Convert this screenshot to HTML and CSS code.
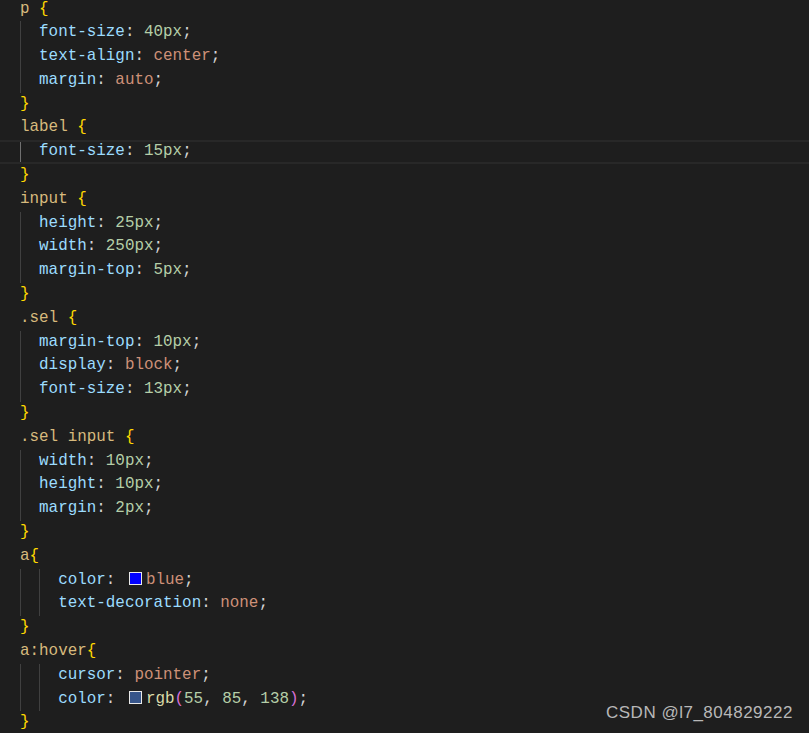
FILE: index.html
```html
<!DOCTYPE html>
<html>
<head>
<meta charset="utf-8">
<link rel="stylesheet" href="styles.css">
</head>
<body>
<div class="editor">
  <div class="ln"><span class="code"><span class="sel">p</span> <span class="b1">{</span></span></div>
  <div class="ln"><span class="g"></span><span class="code"><span class="pr">font-size</span><span class="pn">: </span><span class="nm">40px</span><span class="pn">;</span></span></div>
  <div class="ln"><span class="g"></span><span class="code"><span class="pr">text-align</span><span class="pn">: </span><span class="vl">center</span><span class="pn">;</span></span></div>
  <div class="ln"><span class="g"></span><span class="code"><span class="pr">margin</span><span class="pn">: </span><span class="vl">auto</span><span class="pn">;</span></span></div>
  <div class="ln"><span class="code"><span class="b1">}</span></span></div>
  <div class="ln"><span class="code"><span class="sel">label</span> <span class="b1">{</span></span></div>
  <div class="ln active"><span class="g ga"></span><span class="code"><span class="pr">font-size</span><span class="pn">: </span><span class="nm">15px</span><span class="pn">;</span></span></div>
  <div class="ln"><span class="code"><span class="b1">}</span></span></div>
  <div class="ln"><span class="code"><span class="sel">input</span> <span class="b1">{</span></span></div>
  <div class="ln"><span class="g"></span><span class="code"><span class="pr">height</span><span class="pn">: </span><span class="nm">25px</span><span class="pn">;</span></span></div>
  <div class="ln"><span class="g"></span><span class="code"><span class="pr">width</span><span class="pn">: </span><span class="nm">250px</span><span class="pn">;</span></span></div>
  <div class="ln"><span class="g"></span><span class="code"><span class="pr">margin-top</span><span class="pn">: </span><span class="nm">5px</span><span class="pn">;</span></span></div>
  <div class="ln"><span class="code"><span class="b1">}</span></span></div>
  <div class="ln"><span class="code"><span class="sel">.sel</span> <span class="b1">{</span></span></div>
  <div class="ln"><span class="g"></span><span class="code"><span class="pr">margin-top</span><span class="pn">: </span><span class="nm">10px</span><span class="pn">;</span></span></div>
  <div class="ln"><span class="g"></span><span class="code"><span class="pr">display</span><span class="pn">: </span><span class="vl">block</span><span class="pn">;</span></span></div>
  <div class="ln"><span class="g"></span><span class="code"><span class="pr">font-size</span><span class="pn">: </span><span class="nm">13px</span><span class="pn">;</span></span></div>
  <div class="ln"><span class="code"><span class="b1">}</span></span></div>
  <div class="ln"><span class="code"><span class="sel">.sel input</span> <span class="b1">{</span></span></div>
  <div class="ln"><span class="g"></span><span class="code"><span class="pr">width</span><span class="pn">: </span><span class="nm">10px</span><span class="pn">;</span></span></div>
  <div class="ln"><span class="g"></span><span class="code"><span class="pr">height</span><span class="pn">: </span><span class="nm">10px</span><span class="pn">;</span></span></div>
  <div class="ln"><span class="g"></span><span class="code"><span class="pr">margin</span><span class="pn">: </span><span class="nm">2px</span><span class="pn">;</span></span></div>
  <div class="ln"><span class="code"><span class="b1">}</span></span></div>
  <div class="ln"><span class="code"><span class="sel">a</span><span class="b1">{</span></span></div>
  <div class="ln"><span class="g"></span><span class="g"></span><span class="code"><span class="pr">color</span><span class="pn">: </span><span class="sw sw-blue"></span><span class="vl">blue</span><span class="pn">;</span></span></div>
  <div class="ln"><span class="g"></span><span class="g"></span><span class="code"><span class="pr">text-decoration</span><span class="pn">: </span><span class="vl">none</span><span class="pn">;</span></span></div>
  <div class="ln"><span class="code"><span class="b1">}</span></span></div>
  <div class="ln"><span class="code"><span class="sel">a:hover</span><span class="b1">{</span></span></div>
  <div class="ln"><span class="g"></span><span class="g"></span><span class="code"><span class="pr">cursor</span><span class="pn">: </span><span class="vl">pointer</span><span class="pn">;</span></span></div>
  <div class="ln"><span class="g"></span><span class="g"></span><span class="code"><span class="pr">color</span><span class="pn">: </span><span class="sw sw-rgb"></span><span class="fn">rgb</span><span class="b2">(</span><span class="nm">55</span><span class="pn">, </span><span class="nm">85</span><span class="pn">, </span><span class="nm">138</span><span class="b2">)</span><span class="pn">;</span></span></div>
  <div class="ln"><span class="code"><span class="b1">}</span></span></div>
</div>
<div class="watermark">CSDN @l7_804829222</div>
</body>
</html>
```
FILE: styles.css
```css
html, body {
  margin: 0;
  padding: 0;
  background: #1e1e1e;
  height: 100%;
  overflow: hidden;
}
.editor {
  margin-top: -2.5px;
  padding-left: 20px;
  font-family: "Liberation Mono", "DejaVu Sans Mono", monospace;
  font-size: 15.9px;
  color: #d4d4d4;
}
.ln {
  display: flex;
  height: 23.8px;
  line-height: 23.8px;
  white-space: pre;
  box-sizing: border-box;
  margin-left: -20px;
  padding-left: 20px;
}
.ln.active {
  border-top: 2px solid #282828;
  border-bottom: 2px solid #282828;
  line-height: 19.8px;
}
.g {
  flex: none;
  width: 2ch;
  box-shadow: inset 1px 0 0 #404040;
}
.g.ga {
  box-shadow: inset 1px 0 0 #707070;
}
.code {
  flex: none;
}
.sel { color: #d7ba7d; }
.b1 { color: #ffd700; }
.b2 { color: #da70d6; }
.pr { color: #9cdcfe; }
.pn { color: #d4d4d4; }
.nm { color: #b5cea8; }
.vl { color: #ce9178; }
.fn { color: #dcdcaa; }
.sw {
  display: inline-block;
  width: 11px;
  height: 11px;
  border: 1px solid #e8e8e8;
  margin: 0 4px 0 4px;
  vertical-align: -1px;
}
.sw-blue { background: #0000ff; }
.sw-rgb { background: rgb(55, 85, 138); }
.watermark {
  position: absolute;
  left: 606px;
  top: 703px;
  font-family: "Liberation Sans", Arial, sans-serif;
  font-size: 17px;
  letter-spacing: 0.5px;
  line-height: 20px;
  color: #b8b8b8;
  white-space: nowrap;
}
```
